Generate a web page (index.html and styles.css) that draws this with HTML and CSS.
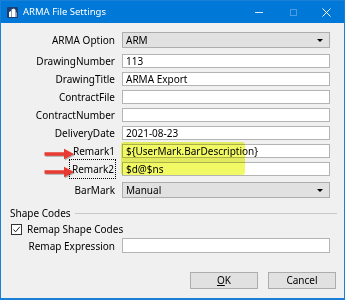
FILE: index.html
```html
<!DOCTYPE html>
<html>
<head>
<meta charset="utf-8">
<link rel="stylesheet" href="styles.css">
</head>
<body>
<div class="window">
  <div class="titlebar">
    <svg class="app-icon" width="11" height="11" viewBox="0 0 11 11">
      <rect x="0" y="0" width="11" height="11" rx="1" fill="#1c3f73"/>
      <path d="M2 10 V5 L4 4 V10 Z" fill="#ffffff"/>
      <path d="M4.5 10 V2.5 L7 1.5 L8.5 3 V10 Z" fill="#ffffff"/>
      <path d="M8.7 10 V5 L9.6 5.5 V10 Z" fill="#cfd8e6"/>
    </svg>
    <span class="title">ARMA File Settings</span>
    <span class="spacer"></span>
    <span class="ctl ctl-min"><span class="min-line"></span></span>
    <span class="ctl ctl-max"><span class="max-box"></span></span>
    <span class="ctl ctl-close">
      <svg width="9" height="9" viewBox="0 0 9 9"><path d="M0.5 0.5 L8.5 8.5 M8.5 0.5 L0.5 8.5" stroke="#ffffff" stroke-width="1"/></svg>
    </span>
  </div>

  <div class="content">
    <div class="row row-combo first">
      <div class="label">ARMA Option</div>
      <div class="combo"><span>ARM</span><span class="caret"></span></div>
    </div>
    <div class="row row-input gap-after-combo">
      <div class="label">DrawingNumber</div>
      <div class="input">113</div>
    </div>
    <div class="row row-input">
      <div class="label">DrawingTitle</div>
      <div class="input">ARMA Export</div>
    </div>
    <div class="row row-input">
      <div class="label">ContractFile</div>
      <div class="input"></div>
    </div>
    <div class="row row-input">
      <div class="label">ContractNumber</div>
      <div class="input"></div>
    </div>
    <div class="row row-input">
      <div class="label">DeliveryDate</div>
      <div class="input">2021-08-23</div>
    </div>
    <div class="row row-input">
      <div class="label">Remark1</div>
      <div class="input">${UserMark.BarDescription}</div>
    </div>
    <div class="row row-input">
      <div class="label"><span class="focus">Remark2</span></div>
      <div class="input">$d@$ns</div>
    </div>
    <div class="row row-combo gap-before-combo">
      <div class="label">BarMark</div>
      <div class="combo"><span>Manual</span><span class="caret"></span></div>
    </div>

    <div class="group-head">
      <span>Shape Codes</span>
      <span class="group-line"></span>
    </div>
    <div class="check-row">
      <span class="checkbox">
        <svg width="9" height="9" viewBox="0 0 9 9"><path d="M1.5 4.5 L3.6 6.8 L7.8 1.8" stroke="#222" stroke-width="1" fill="none"/></svg>
      </span>
      <span>Remap Shape Codes</span>
    </div>
    <div class="row row-expr">
      <div class="label">Remap Expression</div>
      <div class="input tall"></div>
    </div>

    <div class="buttons">
      <div class="btn"><span class="ul">O</span>K</div>
      <div class="btn">Cancel</div>
    </div>
  </div>

  <div class="highlight"></div>
  <svg class="arrow arrow1" width="31" height="12" viewBox="0 0 31 12">
    <path d="M0.5 4.2 H20 V0.8 L30 6 L20 11.2 V7.8 H0.5 Z" fill="#e83a30"/>
  </svg>
  <svg class="arrow arrow2" width="31" height="12" viewBox="0 0 31 12">
    <path d="M0.5 4.2 H20 V0.8 L30 6 L20 11.2 V7.8 H0.5 Z" fill="#e83a30"/>
  </svg>
</div>
</body>
</html>
```

FILE: styles.css
```css
html, body {
  margin: 0;
  padding: 0;
  background: #ffffff;
}

.window {
  position: relative;
  width: 345px;
  height: 300px;
  box-sizing: border-box;
  border: 1px solid #1a7fd6;
  border-bottom-width: 2px;
  background: #f0f0f0;
  font-family: "Noto Sans", "Open Sans", sans-serif;
  font-size: 10px;
  color: #000000;
  overflow: hidden;
}

.titlebar {
  height: 22px;
  background: #0078d7;
  display: flex;
  align-items: center;
  padding-left: 6px;
  color: #ffffff;
}

.app-icon {
  display: block;
  flex: none;
}

.title {
  margin-left: 5px;
  font-size: 9.5px;
  line-height: 22px;
}

.spacer {
  flex: 1;
}

.ctl {
  width: 34px;
  height: 22px;
  display: flex;
  align-items: center;
  justify-content: center;
}

.min-line {
  width: 8px;
  height: 1px;
  background: #d9e9f8;
}

.max-box {
  width: 7px;
  height: 7px;
  border: 1px solid #4d9de0;
  box-sizing: border-box;
}

.ctl-close {
  width: 32px;
  margin-right: 2px;
}

.content {
  display: flex;
  flex-direction: column;
  padding-top: 9px;
}

.row {
  display: flex;
  align-items: center;
  gap: 7px;
  margin-top: 4px;
}

.row.first {
  margin-top: 0;
}

.row.gap-after-combo {
  margin-top: 6px;
}

.row.gap-before-combo {
  margin-top: 6px;
}

.label {
  width: 114px;
  flex: none;
  text-align: right;
  white-space: nowrap;
}

.focus {
  outline: 1px dotted #000000;
  outline-offset: 0;
  padding: 2px 1px 2px 2px;
}

.row-input .input {
  height: 14px;
}

.input {
  width: 208px;
  box-sizing: border-box;
  background: #ffffff;
  border: 1px solid #b4b4b4;
  padding-left: 3px;
  line-height: 12px;
  white-space: nowrap;
  overflow: hidden;
}

.input.tall {
  height: 15px;
}

.combo {
  width: 208px;
  height: 16px;
  box-sizing: border-box;
  background: #e1e1e1;
  border: 1px solid #adadad;
  padding-left: 3px;
  padding-right: 6px;
  display: flex;
  align-items: center;
  justify-content: space-between;
  line-height: 14px;
}

.caret {
  width: 0;
  height: 0;
  border-left: 3px solid transparent;
  border-right: 3px solid transparent;
  border-top: 3px solid #000000;
}

.group-head {
  display: flex;
  align-items: center;
  margin-top: 9px;
  padding-left: 9px;
  padding-right: 7px;
  height: 12px;
  line-height: 12px;
}

.group-line {
  flex: 1;
  height: 1px;
  background: #c8c8c8;
  margin-left: 4px;
}

.check-row {
  display: flex;
  align-items: center;
  gap: 5px;
  margin-top: 4px;
  padding-left: 10px;
  height: 12px;
}

.checkbox {
  width: 11px;
  height: 11px;
  box-sizing: border-box;
  border: 1px solid #333333;
  background: #ffffff;
  display: flex;
  align-items: center;
  justify-content: center;
}

.checkbox svg {
  display: block;
}

.row-expr {
  margin-top: 3px;
}

.buttons {
  display: flex;
  justify-content: flex-end;
  gap: 10px;
  margin-top: 19px;
  padding-right: 8px;
}

.btn {
  width: 68px;
  height: 17px;
  box-sizing: border-box;
  background: #e1e1e1;
  border: 1px solid #adadad;
  display: flex;
  align-items: center;
  justify-content: center;
  line-height: 15px;
}

.ul {
  text-decoration: underline;
}

.highlight {
  position: absolute;
  left: 120px;
  top: 141px;
  width: 124px;
  height: 33px;
  background: rgba(236, 246, 40, 0.72);
  mix-blend-mode: multiply;
  border-radius: 3px;
}

.arrow {
  position: absolute;
  left: 43px;
  filter: drop-shadow(1px 1px 0.6px rgba(0, 0, 0, 0.3));
}

.arrow1 {
  top: 147px;
}

.arrow2 {
  top: 165px;
}
```
